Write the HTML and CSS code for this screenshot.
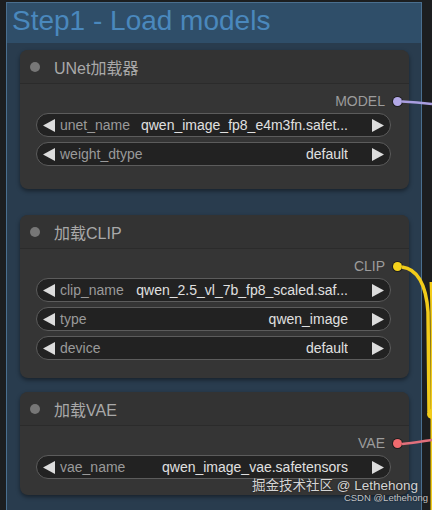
FILE: index.html
```html
<!DOCTYPE html>
<html>
<head>
<meta charset="utf-8">
<link rel="stylesheet" href="styles.css">
</head>
<body>
<div class="canvas">
  <div class="group">
    <div class="group-title">Step1 - Load models</div>
    <div class="nodes">
      <div class="node node-a">
        <div class="node-title"><span class="title-dot"></span><span>UNet加载器</span></div>
        <div class="node-body">
          <div class="out-row"><span class="out-label">MODEL</span><span class="out-dot dot-model"></span></div>
          <div class="widget">
            <svg class="arrow" viewBox="0 0 12 13"><polygon points="12,0 12,13 0,6.5"/></svg>
            <span class="w-label">unet_name</span>
            <span class="w-value">qwen_image_fp8_e4m3fn.safet...</span>
            <svg class="arrow" viewBox="0 0 12 13"><polygon points="0,0 0,13 12,6.5"/></svg>
          </div>
          <div class="widget">
            <svg class="arrow" viewBox="0 0 12 13"><polygon points="12,0 12,13 0,6.5"/></svg>
            <span class="w-label">weight_dtype</span>
            <span class="w-value">default</span>
            <svg class="arrow" viewBox="0 0 12 13"><polygon points="0,0 0,13 12,6.5"/></svg>
          </div>
        </div>
      </div>
      <div class="node node-b">
        <div class="node-title"><span class="title-dot"></span><span>加载CLIP</span></div>
        <div class="node-body">
          <div class="out-row"><span class="out-label">CLIP</span><span class="out-dot dot-clip"></span></div>
          <div class="widget">
            <svg class="arrow" viewBox="0 0 12 13"><polygon points="12,0 12,13 0,6.5"/></svg>
            <span class="w-label">clip_name</span>
            <span class="w-value">qwen_2.5_vl_7b_fp8_scaled.saf...</span>
            <svg class="arrow" viewBox="0 0 12 13"><polygon points="0,0 0,13 12,6.5"/></svg>
          </div>
          <div class="widget">
            <svg class="arrow" viewBox="0 0 12 13"><polygon points="12,0 12,13 0,6.5"/></svg>
            <span class="w-label">type</span>
            <span class="w-value">qwen_image</span>
            <svg class="arrow" viewBox="0 0 12 13"><polygon points="0,0 0,13 12,6.5"/></svg>
          </div>
          <div class="widget">
            <svg class="arrow" viewBox="0 0 12 13"><polygon points="12,0 12,13 0,6.5"/></svg>
            <span class="w-label">device</span>
            <span class="w-value">default</span>
            <svg class="arrow" viewBox="0 0 12 13"><polygon points="0,0 0,13 12,6.5"/></svg>
          </div>
        </div>
      </div>
      <div class="node node-c">
        <div class="node-title"><span class="title-dot"></span><span>加载VAE</span></div>
        <div class="node-body">
          <div class="out-row"><span class="out-label">VAE</span><span class="out-dot dot-vae"></span></div>
          <div class="widget">
            <svg class="arrow" viewBox="0 0 12 13"><polygon points="12,0 12,13 0,6.5"/></svg>
            <span class="w-label">vae_name</span>
            <span class="w-value">qwen_image_vae.safetensors</span>
            <svg class="arrow" viewBox="0 0 12 13"><polygon points="0,0 0,13 12,6.5"/></svg>
          </div>
        </div>
      </div>
    </div>
  </div>
</div>
<svg class="wires" viewBox="0 0 432 510" width="432" height="510">
  <path d="M402 101.5 C414 102 424 103 432 104" stroke="#a99ee0" stroke-width="2.5" fill="none"/>
  <path d="M431 282 C432 300 432 320 432 340 L432 510" stroke="#f2cc1a" stroke-width="3" fill="none"/>
  <path d="M402 267 C418 269 426 284 428 312 L429 412" stroke="#f2cc1a" stroke-width="3.5" fill="none"/>
  <circle cx="432" cy="414" r="5" fill="#f2cc1a"/>
  <path d="M402 444 C414 443 424 441 432 440" stroke="#e2707c" stroke-width="2.5" fill="none"/>
</svg>
<div class="watermark">
  <div class="wm-main">掘金技术社区 @ Lethehong</div>
  <div class="wm-sub">CSDN @Lethehong</div>
</div>
</body>
</html>
```
FILE: styles.css
```css
html, body {
  margin: 0;
  padding: 0;
}
body {
  width: 432px;
  height: 510px;
  overflow: hidden;
  background: #1c1e20;
  font-family: "Liberation Sans", Arial, "Noto Sans CJK SC", sans-serif;
  position: relative;
}
.canvas {
  display: flex;
  padding: 2px 0 0 6px;
  height: 508px;
}
.group {
  width: 414px;
  border: 1px solid #4a6f8f;
  border-bottom: none;
  background: #293c4e;
  display: flex;
  flex-direction: column;
}
.group-title {
  height: 40px;
  background: #2f4e69;
  color: #4a88bd;
  font-size: 28px;
  line-height: 36px;
  padding-left: 5px;
  white-space: nowrap;
}
.nodes {
  display: flex;
  flex-direction: column;
  padding: 7px 12px 0 13px;
}
.node {
  background: #353535;
  border-radius: 8px;
  box-shadow: 0 2px 4px rgba(0,0,0,0.45);
}
.node-b { margin-top: 26px; }
.node-c { margin-top: 14px; }
.node-title {
  height: 33px;
  border-bottom: 1px solid #2b2b2b;
  background: #333333;
  border-radius: 8px 8px 0 0;
  display: flex;
  align-items: center;
  padding-left: 10px;
  color: #a9a9a9;
  font-size: 16px;
}
.title-dot {
  width: 10px;
  height: 10px;
  border-radius: 50%;
  background: #777;
  margin-right: 14px;
}
.node-body {
  padding: 6px 18px 23px 16px;
  display: flex;
  flex-direction: column;
  gap: 5px;
}
.node-b .node-body { padding-bottom: 18px; }
.node-c .node-body { padding-bottom: 16px; }
.out-row {
  height: 22px;
  margin-right: -11px;
  margin-bottom: -4px;
  display: flex;
  justify-content: flex-end;
  align-items: center;
}
.out-label {
  color: #9c9c9c;
  font-size: 14px;
}
.out-dot {
  width: 9px;
  height: 9px;
  border-radius: 50%;
  margin-left: 8px;
  box-shadow: 0 0 0 1px #1e1e1e;
}
.dot-model { background: #b2a8e6; }
.dot-clip { background: #f5d21c; }
.dot-vae { background: #f06a6e; }
.widget {
  height: 22px;
  border: 1px solid #5c5c5c;
  border-radius: 12px;
  background: #222222;
  display: flex;
  align-items: center;
  padding: 0 6px;
  font-size: 14px;
  white-space: nowrap;
}
.arrow {
  width: 12px;
  height: 13px;
  fill: #dcdcdc;
  flex: none;
}
.w-label {
  color: #9a9a9a;
  margin-left: 5px;
  margin-right: 7px;
  flex: none;
}
.w-value {
  flex: 1;
  text-align: right;
  color: #e0e0e0;
  margin-right: 24px;
  overflow: hidden;
}
.wires {
  position: absolute;
  left: 0;
  top: 0;
}
.watermark {
  position: absolute;
  right: 4px;
  bottom: 7px;
  display: flex;
  flex-direction: column;
  align-items: flex-end;
}
.wm-main {
  color: #d4d4d4;
  font-size: 13.5px;
  line-height: 15px;
  margin-right: 10px;
  text-shadow: 0 0 2px rgba(0,0,0,0.6);
}
.wm-sub {
  color: #c4c4c4;
  font-size: 9.5px;
  line-height: 10px;
  text-shadow: 0 0 2px rgba(0,0,0,0.6);
}
```
